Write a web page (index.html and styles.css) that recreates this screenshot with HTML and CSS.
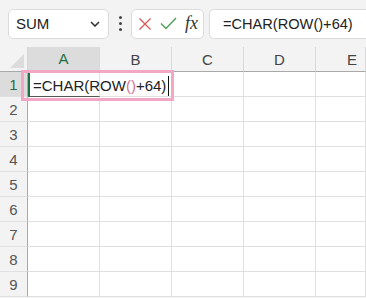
FILE: index.html
```html
<!DOCTYPE html>
<html lang="ja">
<head>
  <meta charset="UTF-8">
  <title>Sheet</title>
  <link rel="stylesheet" href="styles.css">
</head>
<body>
  <div class="toolbar">
    <div class="name-box">
      <span>SUM</span>
      <svg class="chev" width="10" height="6" viewBox="0 0 10 6"><path d="M1 1 L5 5 L9 1" fill="none" stroke="#333" stroke-width="1.6"/></svg>
    </div>
    <div class="dots"><i></i><i></i><i></i></div>
    <div class="fx-buttons">
      <svg width="14" height="14" viewBox="0 0 14 14"><path d="M1.5 1.5 L12.5 12.5 M12.5 1.5 L1.5 12.5" stroke="#d0605e" stroke-width="1.4"/></svg>
      <svg width="17" height="13" viewBox="0 0 17 13"><path d="M1 6.5 L6 11.5 L16 1" fill="none" stroke="#4e9e5a" stroke-width="1.4"/></svg>
      <span class="fx">fx</span>
    </div>
    <div class="formula">=CHAR(ROW()+64)</div>
  </div>

  <div class="sheet">
    <div class="corner"><span class="tri"></span></div>
    <div class="col-head active">A</div>
    <div class="col-head">B</div>
    <div class="col-head">C</div>
    <div class="col-head">D</div>
    <div class="col-head last">E</div>

    <div class="row-head active">1</div>
    <div class="cell a1"></div><div class="cell"></div><div class="cell"></div><div class="cell"></div><div class="cell"></div>
    <div class="row-head">2</div>
    <div class="cell"></div><div class="cell"></div><div class="cell"></div><div class="cell"></div><div class="cell"></div>
    <div class="row-head">3</div>
    <div class="cell"></div><div class="cell"></div><div class="cell"></div><div class="cell"></div><div class="cell"></div>
    <div class="row-head">4</div>
    <div class="cell"></div><div class="cell"></div><div class="cell"></div><div class="cell"></div><div class="cell"></div>
    <div class="row-head">5</div>
    <div class="cell"></div><div class="cell"></div><div class="cell"></div><div class="cell"></div><div class="cell"></div>
    <div class="row-head">6</div>
    <div class="cell"></div><div class="cell"></div><div class="cell"></div><div class="cell"></div><div class="cell"></div>
    <div class="row-head">7</div>
    <div class="cell"></div><div class="cell"></div><div class="cell"></div><div class="cell"></div><div class="cell"></div>
    <div class="row-head">8</div>
    <div class="cell"></div><div class="cell"></div><div class="cell"></div><div class="cell"></div><div class="cell"></div>
    <div class="row-head">9</div>
    <div class="cell"></div><div class="cell"></div><div class="cell"></div><div class="cell"></div><div class="cell"></div>

    <div class="editor">=CHAR(ROW<span class="paren">()</span>+64)<span class="caret"></span></div>
  </div>
</body>
</html>
```

FILE: styles.css
```css
body {
  margin: 0;
  width: 366px;
  height: 298px;
  overflow: hidden;
  background: #f3f3f3;
  font-family: "Liberation Sans", "Noto Sans CJK JP", sans-serif;
  color: #333;
}
.toolbar {
  height: 47px;
  display: flex;
  align-items: center;
  padding-left: 8px;
  box-sizing: border-box;
}
.name-box {
  width: 101px;
  height: 30px;
  box-sizing: border-box;
  background: #fff;
  border: 1px solid #dcdcdc;
  border-radius: 5px;
  display: flex;
  align-items: center;
  justify-content: space-between;
  padding: 0 8px 0 7px;
  font-size: 15px;
  color: #222;
}
.chev {
  margin-top: 1px;
}
.dots {
  width: 22px;
  display: flex;
  flex-direction: column;
  align-items: center;
  gap: 3px;
}
.dots i {
  width: 3px;
  height: 3px;
  background: #444;
  border-radius: 50%;
}
.fx-buttons {
  width: 73px;
  height: 30px;
  box-sizing: border-box;
  background: #fff;
  border: 1px solid #dcdcdc;
  border-radius: 5px;
  display: flex;
  align-items: center;
  justify-content: space-between;
  padding: 0 5px 0 6px;
}
.fx {
  font-family: "Liberation Serif", serif;
  font-style: italic;
  font-size: 18px;
  color: #333;
}
.formula {
  margin-left: 5px;
  flex: 1;
  height: 30px;
  box-sizing: border-box;
  background: #fff;
  border: 1px solid #dcdcdc;
  border-right: none;
  border-radius: 5px 0 0 5px;
  display: flex;
  align-items: center;
  padding-left: 13px;
  font-size: 14.6px;
  color: #222;
}
.sheet {
  position: relative;
  display: grid;
  grid-template-columns: 28px repeat(4, 72px) 1fr;
  grid-auto-rows: 25px;
  background: #fff;
}
.corner {
  position: relative;
  background: #f3f3f3;
  border-right: 1px solid #d4d4d4;
  border-bottom: 1px solid #a9a9a9;
}
.tri {
  position: absolute;
  right: 3px;
  bottom: 3px;
  width: 0;
  height: 0;
  border-left: 14px solid transparent;
  border-bottom: 14px solid #dcdcdc;
}
.col-head {
  background: #f3f3f3;
  border-right: 1px solid #d9d9d9;
  border-bottom: 1px solid #a9a9a9;
  display: flex;
  align-items: center;
  justify-content: center;
  font-size: 15px;
  color: #444;
  box-sizing: border-box;
}
.col-head.last {
  justify-content: flex-start;
  padding-left: 31px;
}
.col-head.active {
  background: #dcdcdc;
  color: #1e7145;
  border-bottom: 2px solid #1e7145;
}
.row-head {
  background: #f3f3f3;
  border-right: 1px solid #a9a9a9;
  border-bottom: 1px solid #e0e0e0;
  display: flex;
  align-items: center;
  justify-content: center;
  font-size: 15px;
  color: #555;
  box-sizing: border-box;
}
.row-head.active {
  background: #dcdcdc;
  color: #1e7145;
}
.cell {
  border-right: 1px solid #e0e0e0;
  border-bottom: 1px solid #e0e0e0;
  box-sizing: border-box;
}
.cell.a1 {
  border-left: 2px solid #1e6e42;
  border-bottom: 1px solid #555;
}
.editor {
  position: absolute;
  left: 21px;
  top: 23px;
  width: 153px;
  height: 31px;
  box-sizing: border-box;
  border: 3px solid #f2a7c5;
  padding-left: 9px;
  display: flex;
  align-items: center;
  font-size: 15px;
  color: #222;
}
.paren {
  color: #d9728c;
}
.caret {
  display: inline-block;
  width: 1px;
  height: 20px;
  background: #111;
  margin-left: 2px;
}
```
